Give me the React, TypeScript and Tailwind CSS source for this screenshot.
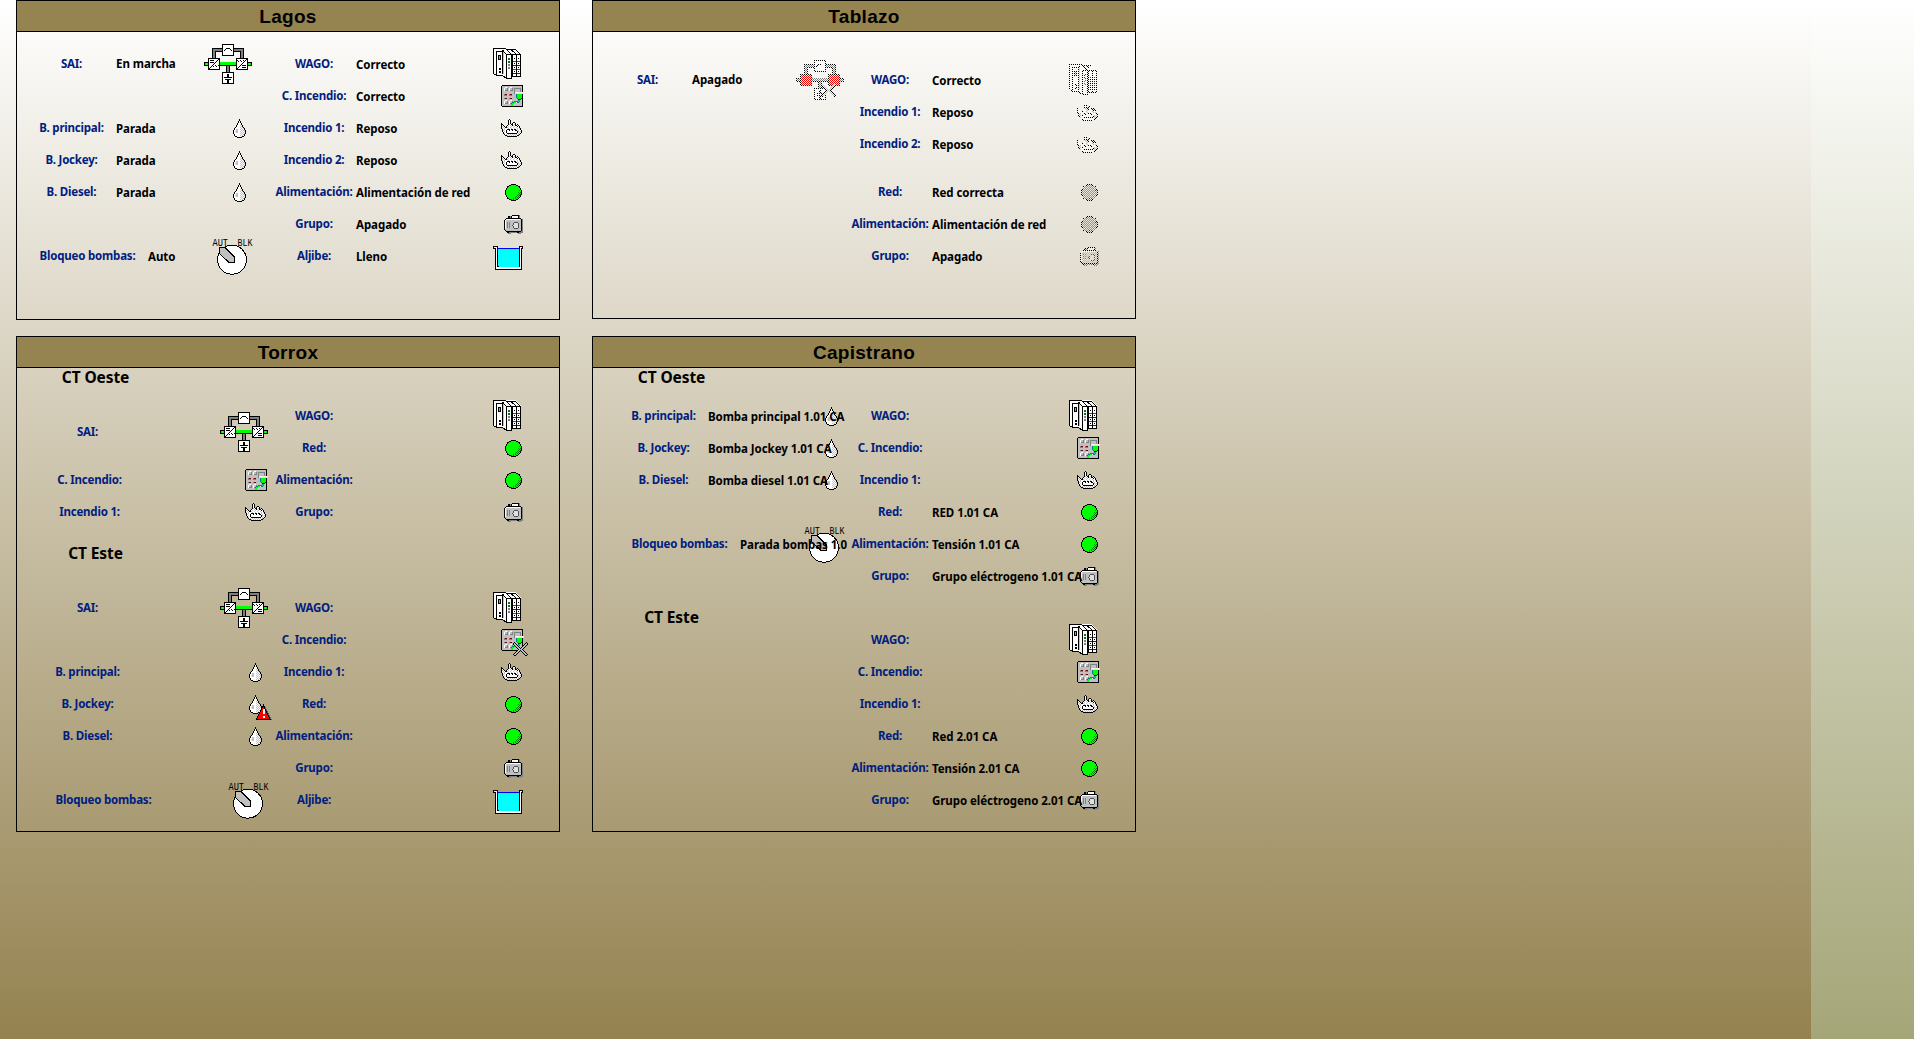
import React from "react";

const INK: Record<string, string> = {
  "#": "#000000",
  W: "#ffffff",
  g: "#c0c0c0",
  G: "#808080",
  n: "#00ff00",
  N: "#008000",
  r: "#ff0000",
  R: "#800000",
  y: "#ffff00",
  t: "#008080",
};

function Sprite({ rows, x = 0, y = 0 }: { rows: string[]; x?: number; y?: number }) {
  const cells: React.ReactElement[] = [];
  rows.forEach((row, j) => {
    let i = 0;
    while (i < row.length) {
      let k = i;
      while (k < row.length && row[k] === row[i]) k++;
      const fill = INK[row[i]];
      if (fill) cells.push(<rect key={`${i}-${j}`} x={x + i} y={y + j} width={k - i} height={1} fill={fill} />);
      i = k;
    }
  });
  return <>{cells}</>;
}

const DROP = [
  "......#......",
  "......#......",
  ".....#W#.....",
  ".....#W#.....",
  "....#WWW#....",
  "....#WWW#....",
  "...#WWWgW#...",
  "...#WWWWg#...",
  "..#WWWWgWg#..",
  ".#WWWWWWgWg#.",
  ".#WggWWgWgW#.",
  "#WWggWWWgWgg#",
  "#WgggWWgWgWg#",
  "#WWggWWWgWgW#",
  "#WWWWWWgWgWg#",
  ".#WWWWWWgWg#.",
  ".#WWWWWgWgW#.",
  "..##WWWWg##..",
  "....#####....",
];

const FLAME = [
  "........#............",
  ".......#W#...........",
  ".......#W#...........",
  ".......#W#..##.......",
  "#......#W#.#WW#......",
  "##.....#gW##Wg#.#....",
  "#W#...#WWgW#gW##W#...",
  "#gW#.#WgWWgWWgWW#W#..",
  "#WgW##gWWgWWgWWgWW#..",
  "#gWgWWWgWWgWWgWWgWg#.",
  ".#WgWW###W##W##WgWW#.",
  ".#gWW#WW#WW#WW##WgWW#",
  ".#WgW#WWWWWWWWWW#gWg#",
  "..#WW#WWWWWWWWWW#WgW#",
  "..#gWW##########WgW#.",
  "...#WgWgWgWgWgWgWg#..",
  "....##gWgWgWgWgW##...",
  "......##########.....",
];

const RECTIFIER = [
  ".........#",
  ".####...#.",
  ".......#..",
  ".####.#...",
  ".....#....",
  "....#.....",
  "...#..#..#",
  "..#.#..#..",
  ".#........",
  "#.........",
];

const INVERTER = [
  ".........#",
  "#..#..#.#.",
  ".#..#..#..",
  "......#...",
  ".....#....",
  "....#.....",
  "...#.####.",
  "..#.......",
  ".#...####.",
  "#.........",
];

const BATTERY = ["....##....", "....##....", "....##....", ".########.", "..........", "..######..", "....##....", "....##....", "....##...."];

const BYPASS = ["...####...", "..#....#..", ".#......#."];

const CROSS = [
  ".#...........#.",
  "#g#.........#g#",
  "#gg#.......#gg#",
  ".#gg#.....#gg#.",
  "..#gg#...#gg#..",
  "...#gg#.#gg#...",
  "....#gg#gg#....",
  ".....#ggg#.....",
  "....#gg#gg#....",
  "...#gg#.#gg#...",
  "..#gg#...#gg#..",
  ".#gg#.....#gg#.",
  "#gg#.......#gg#",
  ".##.........##.",
];

const PLUG = [
  ".....yWyWyWyWy",
  ".....yyyyyyyyy",
  "......tnnnnn#.",
  "......tnnnnn#.",
  "......tnnnnn#.",
  "......tnnnnn#.",
  ".......tnnn#..",
  "........###...",
  "........tn....",
  "....ttttnt....",
  "..ttnnWtt.....",
  ".tnn..........",
  ".nn...........",
  ".nn...........",
];

function Ups({ alarm = false }: { alarm?: boolean }) {
  const bar = alarm ? "#808080" : "#00ff00";
  const box = alarm ? "#ff0000" : "#ffffff";
  return (
    <g transform="translate(0 -4)">
      <path d="M8 4h32v12h-4V8H12v8H8zM22 21h4v8h-4z" fill="#000" />
      <path d="M9 5h30v11h-2V7H11v9H9zM23 21h2v8h-2z" fill="#808080" />
      <path d="M0 18h48v4H0z" fill="#000" />
      <path d="M1 19h46v2H1zM16 18h16v3H16z" fill={bar} />
      <path d="M18 0h12v12H18zM4 14h12v12H4zM32 14h12v12H32zM18 28h12v12H18z" fill="#000" />
      <path d="M19 1h10v10H19zM19 29h10v10H19z" fill="#fff" />
      <path d="M5 15h10v10H5zM33 15h10v10H33z" fill={box} />
      <Sprite rows={BYPASS} x={19} y={4} />
      <Sprite rows={BATTERY} x={19} y={30} />
      {!alarm && <Sprite rows={RECTIFIER} x={5} y={15} />}
      {!alarm && <Sprite rows={INVERTER} x={33} y={15} />}
      {alarm && <Sprite rows={CROSS} x={25} y={23} />}
    </g>
  );
}

function Knob() {
  return (
    <g>
      <circle cx="28" cy="19.700" r="14.5" fill="#fff" stroke="#000" />
      <path d="M15.5 7.5h5.5l9.5 9.5v5.500h-5.500l-9.500-9z" fill="#c0c0c0" stroke="#000" />
      <text x="8.500" y="6" fontSize="10" textLength="15.500" lengthAdjust="spacingAndGlyphs" className="font-['Liberation_Mono',monospace] font-normal">AUT</text>
      <text x="33.500" y="6" fontSize="10" textLength="15" lengthAdjust="spacingAndGlyphs" className="font-['Liberation_Mono',monospace] font-normal">BLK</text>
    </g>
  );
}

function Wago() {
  return (
    <g>
      <path d="M0 0h22l6 6v22h-9v2h-6l-4-3H3l-3-2z" fill="#fff" />
      <path
        d="M.5 25V.5H13M.5 25.500L3.500 27.500H9.500L13.500 30.500H18.500V6.500H13.500V30M3.500 27V3.500H9.500V26M13 1.500H22.500L27.500 6.500V28.500H18.500M9.500 2L13.500 6.500M13.500 1.500L18.500 6.500M18.500 2L23.500 6.500V28M18.500 6.500H27.500M19.500 7V28"
        fill="none"
        stroke="#000"
      />
      <path d="M10 4h1v22h-1z" fill="#c0c0c0" />
      <path d="M5 7h3v5H5zM6 20h2v2H6zM6 23h2v2H6z" fill="#000" />
      <path d="M6 8h1v3H6z" fill="#00ff00" />
      <path d="M15 10h2v2h-2zM15 13h2v2h-2z" fill="#008000" />
      <path d="M15 16h2v2h-2zM15 19h2v2h-2z" fill="#808080" />
      <path d="M21 10.500h7M21 15.500h7M21 19.500h7M21 23.500h7" stroke="#000" strokeDasharray="1 1" />
      <path d="M20 13.500h3M24 13.500h3M20 21.500h3M24 21.500h3" stroke="#008000" />
      <path d="M20 17.500h3M24 17.500h3M20 25.500h3M24 25.500h3" stroke="#800000" />
    </g>
  );
}

function FirePanel({ crossed = false }: { crossed?: boolean }) {
  return (
    <g transform="translate(8 5)">
      <path d="M1 0h20l1 1v20l-1 1H1l-1-1V1z" fill="#000" />
      <path d="M1 1h20v20H1z" fill="#c0c0c0" />
      <path d="M13.500 3.500h6v5h-6z" fill="#c0c0c0" stroke="#808080" />
      <path d="M4 2h2v1H4zM3 3h1v3H3zM9 2h2v1H9zM8 3h1v3H8zM4 15h2v1H4zM3 16h1v3H3zM9 15h2v1H9zM8 16h1v3H8z" fill="#fff" />
      <path d="M6 3h1v3H4V5h2zM11 3h1v3H9V5h2zM6 16h1v3H4v-1h2zM11 16h1v3H9v-1h2zM3 9h3v2H3zM8 9h3v2H8zM3 13h3v1H3zM8 13h3v1H8z" fill="#808080" />
      <path d="M4 9h2v1H4zM9 9h2v1H9zM4 13h2v1H4zM9 13h2v1H9z" fill="#800000" />
      <Sprite rows={PLUG} x={9} y={7} />
      {crossed && <Sprite rows={CROSS} x={12} y={13} />}
    </g>
  );
}

function Lamp() {
  return (
    <g>
      <circle cx="20.500" cy="16.500" r="8" fill="#00ff00" stroke="#000" />
      <path
        d="M26 14h1m-2 2h1m1 0h1m-2 1h1m-2 1h1m1 0h1m-4 1h1m1 0h1m-4 1h1m1 0h1m-4 1h1m1 0h1m-5 1h1m1 0h1m-5 1h1m1 0h1"
        stroke="#008000"
        transform="translate(0 .5)"
      />
    </g>
  );
}

function Genset() {
  return (
    <g transform="translate(11 7)">
      <path d="M5 1h2v2h1V1l1-1h5l1 1v3h2l1 1v12l-1 1h-1v1h-3v-1H6v1H3v-2H1V5h4z" fill="#808080" transform="translate(1 0)" />
      <path d="M4 1h2v2h1V1l1-1h6l1 1v2h1l2 2v10l-2 2h-1v1h-2v-1H5v1H3v-1H2l-2-2V5l2-2h2z" fill="#000" />
      <path d="M8 1h6v2H8z" fill="#fff" />
      <path d="M2 4h14l1 1v10l-1 1H2l-1-1V5z" fill="#c0c0c0" />
      <path d="M2 4h14v1H2v9H1V5z" fill="#fff" />
      <path d="M3 7h1v6H3zM5 7h1v6H5z" fill="#808080" />
      <circle cx="12" cy="10.500" r="3" fill="#e0e0e0" stroke="#505050" />
    </g>
  );
}

function Tank() {
  return (
    <g transform="translate(0 6)">
      <path d="M0 0h5v20h21V0h4v3h-1v21H2V3H0z" fill="#000" />
      <path d="M1 1h3v20h23V1h2v1h-1v21H3V2H1z" fill="#fff" />
      <path d="M5 2h21v18l-1 1H6l-1-1z" fill="#00ffff" />
      <path d="M5 2h21v1H5z" fill="#0000ff" />
    </g>
  );
}

function Alert() {
  return (
    <g transform="translate(36 17)">
      <path d="M8 1L15 15H2z" fill="#606060" transform="translate(1 0)" />
      <path d="M7.500 0.500L14 14H0.500z" fill="#ff0000" stroke="#000" />
      <path d="M6.500 4h2v5h-2zM6.500 11h2v2h-2z" fill="#fff" />
    </g>
  );
}

type IconName = "ups" | "upsAlarm" | "drop" | "dropAlert" | "knob" | "wago" | "panel" | "panelX" | "flame" | "lamp" | "genset" | "tank";

/* Left-hand slots are 48px wide, right-hand slots 32px; small icons sit against the right edge. */
function Icon({ name, wide, off }: { name: IconName; wide?: boolean; off?: boolean }) {
  const dx = wide ? 17 : 0;
  return (
    <svg
      className={wide ? "h-8 w-12 shrink-0 overflow-visible" : "h-8 w-8 shrink-0 overflow-visible"}
      viewBox={wide ? "0 0 48 32" : "0 0 32 32"}
      shapeRendering="crispEdges"
    >
      <defs>
        <pattern id="checker" width="2" height="2" patternUnits="userSpaceOnUse">
          <path d="M0 0h1v1H0zM1 1h1v1H1z" fill="#fff" />
        </pattern>
        <mask id="dither" maskUnits="userSpaceOnUse" x="-10" y="-10" width="80" height="60">
          <rect x="-10" y="-10" width="80" height="60" fill="url(#checker)" />
        </mask>
      </defs>
      <g mask={off ? "url(#dither)" : undefined}>
        {name === "ups" && <Ups />}
        {name === "upsAlarm" && <Ups alarm />}
        {(name === "drop" || name === "dropAlert") && <Sprite rows={DROP} x={29} y={7} />}
        {name === "dropAlert" && <Alert />}
        {name === "knob" && <Knob />}
        <g transform={`translate(${dx} 0)`}>
          {name === "wago" && <Wago />}
          {name === "panel" && <FirePanel />}
          {name === "panelX" && <FirePanel crossed />}
          {name === "flame" && <Sprite rows={FLAME} x={8} y={7} />}
          {name === "lamp" && <Lamp />}
          {name === "genset" && <Genset />}
          {name === "tank" && <Tank />}
        </g>
      </g>
    </svg>
  );
}

const LABEL = "shrink-0 whitespace-nowrap text-center tracking-[-0.2px] text-[#00207f]";
const VALUE = "z-10 w-0 flex-1 whitespace-nowrap tracking-[-0.06px] text-black";

function Left({ label, value, icon, long, off, low = true, inset }: { label: string; value?: string; icon: IconName; long?: boolean; off?: boolean; low?: boolean; inset?: boolean }) {
  return (
    <div className="flex h-8 items-center">
      <div className={`${LABEL} ${long ? "w-28" : "w-20"} ${inset ? "pl-[3px]" : "pr-px"}`}>{label}</div>
      <div className={`${VALUE} pl-1 ${low ? "pt-0.5" : ""}`}>{value}</div>
      <Icon name={icon} wide off={off} />
    </div>
  );
}

function Right({ label, value, icon, off }: { label: string; value?: string; icon: IconName; off?: boolean }) {
  return (
    <div className="flex h-8 items-center">
      <div className={`${LABEL} w-[84px]`}>{label}</div>
      <div className={`${VALUE} pt-0.5`}>{value}</div>
      <Icon name={icon} off={off} />
    </div>
  );
}

function Panel({ title, height, children }: { title: string; height: string; children: React.ReactNode }) {
  return (
    <section className={`flex w-[544px] flex-col border border-black ${height}`}>
      <h2 className="flex h-[31px] shrink-0 items-center justify-center border-b border-black bg-[#958350] font-['Liberation_Sans',sans-serif] text-[19px] leading-none font-bold tracking-[0.3px]">
        {title}
      </h2>
      <div className="flex flex-1 justify-between pr-[34px]">{children}</div>
    </section>
  );
}

function Heading({ children }: { children: string }) {
  return (
    <h3 className="-ml-4 flex h-5 w-32 items-center justify-center pr-px pb-px text-[15.5px] leading-none tracking-[-0.1px]">
      {children}
    </h3>
  );
}

export default function App() {
  return (
    <main className="flex h-[1039px] w-[1914px] overflow-hidden bg-linear-to-b from-white to-[#a5a678] font-['Noto_Sans',sans-serif] text-[11.5px] leading-4 font-bold">
      <div className="flex w-[1811px] items-start gap-8 bg-linear-to-b from-white to-[#94824f] pl-4">
        <div className="flex flex-col gap-4">
          <Panel title="Lagos" height="h-[320px]">
            <div className="w-[235px] pt-4 pl-[15px]">
              <Left label="SAI:" value="En marcha" icon="ups" low={false} />
              <div className="h-8" />
              <Left label="B. principal:" value="Parada" icon="drop" />
              <Left label="B. Jockey:" value="Parada" icon="drop" />
              <Left label="B. Diesel:" value="Parada" icon="drop" />
              <div className="h-8" />
              <Left label="Bloqueo bombas:" value="Auto" icon="knob" long />
            </div>
            <div className="w-[253px] pt-4">
              <Right label="WAGO:" value="Correcto" icon="wago" />
              <Right label="C. Incendio:" value="Correcto" icon="panel" />
              <Right label="Incendio 1:" value="Reposo" icon="flame" />
              <Right label="Incendio 2:" value="Reposo" icon="flame" />
              <Right label="Alimentación:" value="Alimentación de red" icon="lamp" />
              <Right label="Grupo:" value="Apagado" icon="genset" />
              <Right label="Aljibe:" value="Lleno" icon="tank" />
            </div>
          </Panel>
          <Panel title="Torrox" height="h-[496px]">
            <div className="w-[251px] pl-[31px]">
              <Heading>CT Oeste</Heading>
              <div className="h-7" />
              <Left label="SAI:" icon="ups" />
              <div className="h-4" />
              <Left label="C. Incendio:" icon="panel" inset />
              <Left label="Incendio 1:" icon="flame" inset />
              <div className="h-4" />
              <Heading>CT Este</Heading>
              <div className="h-7" />
              <Left label="SAI:" icon="ups" />
              <div className="h-8" />
              <Left label="B. principal:" icon="drop" />
              <Left label="B. Jockey:" icon="dropAlert" />
              <Left label="B. Diesel:" icon="drop" />
              <div className="h-8" />
              <Left label="Bloqueo bombas:" icon="knob" long />
            </div>
            <div className="w-[253px] pt-8">
              <Right label="WAGO:" icon="wago" />
              <Right label="Red:" icon="lamp" />
              <Right label="Alimentación:" icon="lamp" />
              <Right label="Grupo:" icon="genset" />
              <div className="h-16" />
              <Right label="WAGO:" icon="wago" />
              <Right label="C. Incendio:" icon="panelX" />
              <Right label="Incendio 1:" icon="flame" />
              <Right label="Red:" icon="lamp" />
              <Right label="Alimentación:" icon="lamp" />
              <Right label="Grupo:" icon="genset" />
              <Right label="Aljibe:" icon="tank" />
            </div>
          </Panel>
        </div>
        <div className="flex flex-col gap-[17px]">
          <Panel title="Tablazo" height="h-[319px]">
            <div className="w-[251px] pt-8 pl-[15px]">
              <Left label="SAI:" value="Apagado" icon="upsAlarm" off low={false} />
            </div>
            <div className="w-[253px] pt-8">
              <Right label="WAGO:" value="Correcto" icon="wago" off />
              <Right label="Incendio 1:" value="Reposo" icon="flame" off />
              <Right label="Incendio 2:" value="Reposo" icon="flame" off />
              <div className="h-4" />
              <Right label="Red:" value="Red correcta" icon="lamp" off />
              <Right label="Alimentación:" value="Alimentación de red" icon="lamp" off />
              <Right label="Grupo:" value="Apagado" icon="genset" off />
            </div>
          </Panel>
          <Panel title="Capistrano" height="h-[496px]">
            <div className="w-[251px] pl-[31px]">
              <Heading>CT Oeste</Heading>
              <div className="h-3" />
              <Left label="B. principal:" value="Bomba principal 1.01 CA" icon="drop" />
              <Left label="B. Jockey:" value="Bomba Jockey 1.01 CA" icon="drop" />
              <Left label="B. Diesel:" value="Bomba diesel 1.01 CA" icon="drop" />
              <div className="h-8" />
              <Left label="Bloqueo bombas:" value="Parada bombas 1.0" icon="knob" long />
              <div className="h-12" />
              <Heading>CT Este</Heading>
            </div>
            <div className="w-[253px] pt-8">
              <Right label="WAGO:" icon="wago" />
              <Right label="C. Incendio:" icon="panel" />
              <Right label="Incendio 1:" icon="flame" />
              <Right label="Red:" value="RED 1.01 CA" icon="lamp" />
              <Right label="Alimentación:" value="Tensión 1.01 CA" icon="lamp" />
              <Right label="Grupo:" value="Grupo eléctrogeno 1.01 CA" icon="genset" />
              <div className="h-8" />
              <Right label="WAGO:" icon="wago" />
              <Right label="C. Incendio:" icon="panel" />
              <Right label="Incendio 1:" icon="flame" />
              <Right label="Red:" value="Red 2.01 CA" icon="lamp" />
              <Right label="Alimentación:" value="Tensión 2.01 CA" icon="lamp" />
              <Right label="Grupo:" value="Grupo eléctrogeno 2.01 CA" icon="genset" />
            </div>
          </Panel>
        </div>
      </div>
    </main>
  );
}
